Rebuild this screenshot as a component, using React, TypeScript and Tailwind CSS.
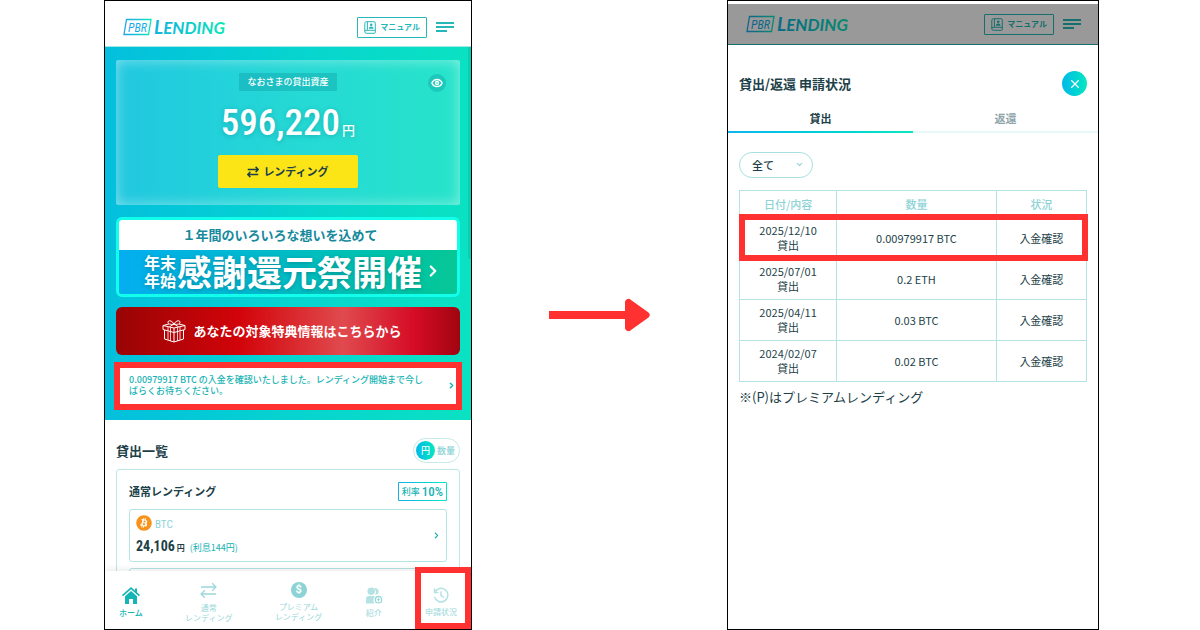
import type { ReactNode } from 'react'
import { FaBitcoin, FaChevronRight } from 'react-icons/fa'
import { ChevronDown, ChevronRight, Eye, X } from 'lucide-react'

const history = [
  { date: '2025/12/10', amount: '0.00979917 BTC', marked: true },
  { date: '2025/07/01', amount: '0.2 ETH' },
  { date: '2025/04/11', amount: '0.03 BTC' },
  { date: '2024/02/07', amount: '0.02 BTC' }
]

function Marker({ className }: { className: string }) {
  return (
    <span
      aria-hidden="true"
      className={`pointer-events-none absolute z-10 border-6 border-[#ff3131] ${className}`}
    />
  )
}

function Logo() {
  return (
    <a href="#" aria-label="PBR LENDING">
      <svg width="108" height="24" viewBox="0 -2 108 24" className="block overflow-visible">
        <defs>
          <linearGradient id="logo" gradientUnits="userSpaceOnUse" x1="0" y1="0" x2="104" y2="0">
            <stop offset="0" stopColor="#1ea4ee" />
            <stop offset="0.5" stopColor="#0bbfd4" />
            <stop offset="1" stopColor="#0ce8b8" />
          </linearGradient>
          <linearGradient id="logoBox" x1="0" y1="0" x2="1" y2="0">
            <stop offset="0" stopColor="#1ea4ee" />
            <stop offset="1" stopColor="#0ce8b8" />
          </linearGradient>
        </defs>
        <path d="M4.500 2.5h24.5l-2.500 15h-24.500z" fill="none" stroke="url(#logoBox)" strokeWidth="1.3" />
        <g fill="url(#logo)" fontStyle="italic">
          <text x="6" y="15" fontSize="12" fontFamily='"Roboto Condensed", "Liberation Sans Narrow", sans-serif'>
            PBR
          </text>
          <text x="32" y="17" fontSize="19" fontWeight="700" fontFamily="Lato, sans-serif">
            L<tspan fontSize="17">ENDING</tspan>
          </text>
        </g>
      </svg>
    </a>
  )
}

function Header() {
  return (
    <header className="flex items-center justify-between px-[17px]">
      <Logo />
      <div className="flex items-center gap-[9px]">
        <button className="flex h-[21px] items-center gap-1 rounded-[1px] border border-[#26b8b8] px-[6px] text-[8px] font-bold text-[#26b8b8]">
          <svg width="12" height="13" viewBox="0 0 12 13" fill="none" stroke="currentColor">
            <path d="M2.5 .7h7.3a1.5 1.5 0 0 1 1.5 1.5v9.1a1 1 0 0 1-1 1H2.4a1.6 1.6 0 0 1-1.6-1.6V2.4A1.7 1.7 0 0 1 2.5.7zM.8 10.5a1.2 1.2 0 0 1 1.2-1.2h9.3M3.4.9v8" />
            <circle cx="7.2" cy="3.8" r="1.3" fill="currentColor" stroke="none" />
            <path d="M4.8 7.8a2.4 2.4 0 0 1 4.8 0z" fill="currentColor" stroke="none" />
          </svg>
          マニュアル
        </button>
        <button aria-label="メニュー" className="flex flex-col gap-[2px]">
          <span className="h-[2px] w-[18px] bg-[#26b8b8]" />
          <span className="h-[2px] w-[18px] bg-[#26b8b8]" />
          <span className="h-[2px] w-[11px] bg-[#26b8b8]" />
        </button>
      </div>
    </header>
  )
}

function SwapIcon({ size, stroke }: { size: number; stroke: number }) {
  return (
    <svg width={size} height={size} viewBox="0 0 16 16" fill="none" stroke="currentColor" strokeWidth={stroke}>
      <path d="M1 4.7h14M11.5 1.2L15 4.7l-3.5 3.5M15 11.3H1M4.5 7.8L1 11.3l3.5 3.5" />
    </svg>
  )
}

function GiftIcon() {
  return (
    <svg width="24" height="24" viewBox="0 0 24 24" fill="none" stroke="white" strokeLinejoin="round">
      <path d="M1 6.5L12 9l11-2.500v4L12 13.500 1 10.500zM1 6.500l6-1.500M23 6.500L17 5M2.500 11v9L12 23l9.500-3v-9M12 9v14" />
      <path d="M6 8v4M6 12.500v8.500M8.500 8.500v4M8.500 13v9M15.500 8.500v4M15.500 13v9M18 8v4M18 12.500v8.500" strokeWidth=".8" />
      <path d="M12 5C9 5.800 5.500 5.200 6 3s4-1.500 6 2c2-3.500 5.500-4.200 6-2s-3 2.800-6 2zM12 5L7.500 7.800M12 5l4.500 2.800" />
    </svg>
  )
}

function NavItem({ icon, active, children }: { icon: ReactNode; active?: boolean; children: ReactNode }) {
  return (
    <a
      href="#"
      className={`flex flex-col items-center gap-1 text-center text-[8px] leading-[10px] ${
        active ? 'font-medium text-[#14b5b5]' : 'text-[#9ad8da]'
      }`}
    >
      {icon}
      <span>{children}</span>
    </a>
  )
}

function BottomNav() {
  return (
    <nav className="relative flex h-[58px] shrink-0 items-center justify-between bg-white px-[14px] pt-1 shadow-[0_-2px_6px_rgba(0,0,0,0.08)]">
      <NavItem
        active
        icon={
          <svg width="18" height="17" viewBox="0 0 18 17" fill="currentColor">
            <path d="M9 0l4 3.500V1.500h2v3.800l3 2.700-1.100 1.300L9 2.300 1.100 9.300 0 8z" />
            <path d="M9 4l6 5.300V17h-4v-5H7v5H3V9.300z" />
          </svg>
        }
      >
        ホーム
      </NavItem>
      <NavItem icon={<SwapIcon size={17} stroke={1.2} />}>
        通常
        <br />
        レンディング
      </NavItem>
      <NavItem
        icon={
          <span className="flex size-4 items-center justify-center rounded-full bg-[#8dd3d6] font-[Roboto,sans-serif] text-[11px] font-bold text-white">
            $
          </span>
        }
      >
        プレミアム
        <br />
        レンディング
      </NavItem>
      <NavItem
        icon={
          <svg width="18" height="17" viewBox="0 0 18 17" fill="#b5e2e2">
            <path d="M9 1.200a3.500 3.500 0 1 1 1 6.800 5 5 0 0 0-1-6.800z" />
            <circle cx="6.200" cy="4.200" r="3.700" />
            <path d="M1 16.500V12a3 3 0 0 1 3-3h4.500a3 3 0 0 1 1.700.5 5 5 0 0 0-.7 7z" />
            <circle cx="13.500" cy="12.700" r="3.200" fill="none" stroke="#9ad8da" strokeWidth="1.300" />
            <path d="M13.500 11v3.400M11.800 12.700h3.400" stroke="#9ad8da" />
          </svg>
        }
      >
        紹介
      </NavItem>
      <NavItem
        icon={
          <svg width="16" height="16" viewBox="0 0 16 16" fill="none" stroke="#b5e2e2" strokeWidth="1.500">
            <path d="M1.500 1.500v4h4M1.800 5.300A6.800 6.800 0 1 1 1.500 10M8 4.500V8.500l3 2" />
          </svg>
        }
      >
        申請状況
      </NavItem>
      <Marker className="-top-1 right-0 bottom-0 w-14" />
    </nav>
  )
}

function AssetCard() {
  return (
    <section className="relative flex flex-col items-center rounded-[2px] bg-white/12 pt-[13px] pb-[17px] shadow-[inset_0_0_14px_rgba(255,255,255,0.45)]">
      <h2 className="rounded-[1px] bg-[#0a8c96]/30 px-2 text-[9px] leading-[18px] font-medium text-white">
        なおさまの貸出資産
      </h2>
      <button
        aria-label="表示切替"
        className="absolute top-[14px] right-[14px] flex size-[18px] items-center justify-center rounded-full bg-[#0a8c96]/30 text-white"
      >
        <Eye size={12} strokeWidth={3} />
      </button>
      <p className="flex items-baseline gap-[2px] pt-[9px] leading-[46px] text-white [text-shadow:0_1px_5px_rgba(0,110,120,0.35)]">
        <span className="font-['Roboto_Condensed','Liberation_Sans_Narrow',sans-serif] text-[37px] font-medium">596,220</span>
        <span className="text-[13px] font-medium">円</span>
      </p>
      <button className="mt-[2px] flex h-[33px] w-[140px] items-center justify-center gap-1 rounded-[2px] bg-[#fbe516] text-[11px] font-bold text-[#1d3f48]">
        <SwapIcon size={12} stroke={2} />
        レンディング
      </button>
    </section>
  )
}

function Campaign() {
  return (
    <a href="#" className="mt-3 block overflow-hidden rounded-md border-[3px] border-[#12ffec]">
      <p className="bg-white pr-4 text-center text-[13px] leading-[30px] font-bold text-[#168a9c]">
        １年間のいろいろな想いを込めて
      </p>
      <div className="flex h-11 items-center justify-center bg-linear-to-r from-[#06aef0] to-[#08c795] pb-[3px] pl-[10px] text-white [text-shadow:0_1px_4px_rgba(0,80,90,0.4)]">
        <span className="text-[16px] leading-[18px] font-bold">
          年末
          <br />
          年始
        </span>
        <span className="ml-px text-[35px] leading-[41px] font-bold">感謝還元祭開催</span>
        <ChevronRight size={18} strokeWidth={3} className="ml-[2px]" />
      </div>
    </a>
  )
}

function HomePhone() {
  return (
    <div className="flex h-screen flex-col overflow-hidden border border-black bg-white">
      <div className="flex h-[46px] shrink-0 flex-col justify-center border-b border-[#a5e8e4] pt-[7px]">
        <Header />
      </div>
      <main className="relative min-h-0 flex-1 overflow-hidden">
        <div className="bg-linear-to-r from-[#04bfdd] via-[#07d3d0] to-[#0be2c2] px-[11px] pt-[13px] pb-[12px]">
          <AssetCard />
          <Campaign />
          <a
            href="#"
            className="mt-[10px] flex h-12 items-center justify-center gap-[7px] rounded-md bg-[linear-gradient(90deg,#990404_0%,#d2040a_36%,#e04a4e_66%,#d50b25_87%,#a00510_100%)] pr-3 text-[13px] font-bold text-white"
          >
            <GiftIcon />
            あなたの対象特典情報はこちらから
          </a>
          <a
            href="#"
            className="relative mt-[7px] flex h-[46px] items-center rounded-[2px] bg-white pr-[4px] pl-[13px] text-[9px] leading-[11px] font-medium text-[#17b3b3]"
          >
            <span className="flex-1 pb-[1px]">
              0.00979917 BTC の入金を確認いたしました。レンディング開始まで今し
              <br />
              ばらくお待ちください。
            </span>
            <ChevronRight size={9} strokeWidth={4} />
            <Marker className="-inset-x-[2px] top-0 -bottom-[2px]" />
          </a>
        </div>
        <span className="absolute top-0 right-0 h-[212px] w-[3px] bg-black/8" />

        <section className="px-[11px] pt-[18px]">
          <div className="flex items-center justify-between">
            <h2 className="text-[13px] font-bold text-[#1d3f48]">貸出一覧</h2>
            <button className="flex h-[25px] items-center gap-[2px] rounded-full border border-[#c5e9e9] px-[2px] pr-1 text-[9px] font-medium text-[#8dd3d6]">
              <span className="flex size-[19px] items-center justify-center rounded-full bg-linear-to-r from-[#04b8e8] to-[#0be8be] text-white">
                円
              </span>
              数量
            </button>
          </div>
          <div className="mt-[6px] rounded-[3px] border border-[#c0e6e6] px-3 pt-3">
            <div className="flex items-center justify-between">
              <h3 className="text-[11px] font-bold text-[#1d3f48]">通常レンディング</h3>
              <p className="rounded-[1px] bg-linear-to-r from-[#17b0e8] to-[#0be8be] p-px">
                <span className="flex items-center gap-[2px] bg-white px-[3px] text-[9px] leading-[17px] font-medium text-[#17b3b3]">
                  利率
                  <span className="font-['Roboto_Condensed','Liberation_Sans_Narrow',sans-serif] text-[13px]">10%</span>
                </span>
              </p>
            </div>
            <a href="#" className="mt-2 flex items-center justify-between rounded-[3px] border border-[#b5e2e2] px-[6px] py-[5px]">
              <div>
                <p className="flex items-center gap-[3px] font-['Roboto_Condensed','Liberation_Sans_Narrow',sans-serif] text-[11px] text-[#8dd3d6]">
                  <FaBitcoin size={16} className="text-[#f7931a]" />
                  <span className="pt-[3px] leading-[13px]">BTC</span>
                </p>
                <p className="mt-[5px] flex items-baseline text-[#1d3f48]">
                  <span className="font-['Roboto_Condensed','Liberation_Sans_Narrow',sans-serif] text-[14px] leading-5 font-bold">
                    24,106
                  </span>
                  <span className="ml-[2px] text-[8px] font-bold">円</span>
                  <span className="ml-[5px] text-[9px] text-[#17b3b3]">(利息144円)</span>
                </p>
              </div>
              <FaChevronRight size={7} className="text-[#17b3b3]" />
            </a>
            <div className="mt-[6px] h-[53px] rounded-[3px] border border-[#b5e2e2]" />
          </div>
        </section>
      </main>
      <BottomNav />
    </div>
  )
}

function StatusPhone() {
  return (
    <div className="flex h-screen flex-col border border-black bg-white pt-[3px]">
      <div className="relative flex h-[41px] shrink-0 flex-col justify-center border-b border-[#26b8b8]">
        <Header />
        <div className="absolute inset-0 -bottom-px bg-black/40" />
      </div>
      <main className="text-[#1d3f48]">
        <div className="flex items-center justify-between px-[11px] pt-[26px]">
          <h1 className="text-[13px] font-bold">貸出/返還 申請状況</h1>
          <button
            aria-label="閉じる"
            className="flex size-[25px] items-center justify-center rounded-full bg-linear-to-r from-[#04b8e8] to-[#0be8be] text-white"
          >
            <X size={14} strokeWidth={2} />
          </button>
        </div>
        <div role="tablist" className="mt-3 grid grid-cols-2 text-[11px] font-bold">
          <button role="tab" aria-selected="true" className="leading-[21px]">
            貸出
            <span className="mt-[2px] block h-[2px] bg-linear-to-r from-[#10b4ee] to-[#0be8be]" />
          </button>
          <button role="tab" aria-selected="false" className="leading-[21px] text-[#8fa5aa]">
            返還
            <span className="mt-[2px] block h-[2px] bg-[#e8f8f8]" />
          </button>
        </div>
        <div className="px-[11px] pt-[18px]">
          <label className="relative inline-block align-top">
            <select aria-label="種別" className="h-[26px] w-[74px] appearance-none rounded-full border border-[#a8dfe0] bg-white pl-3 text-[11px] font-medium">
              <option>全て</option>
            </select>
            <ChevronDown size={9} strokeWidth={3} className="pointer-events-none absolute top-[9px] right-[9px] text-[#8dd3d6]" />
          </label>
          <table className="mt-3 w-full table-fixed border-collapse text-center text-[11px] leading-[15px]">
            <thead>
              <tr className="h-[27px] text-[#8dd3d6]">
                <th className="w-[28%] border border-[#b5e2e2] font-medium">日付/内容</th>
                <th className="w-[46%] border border-[#b5e2e2] font-medium">数量</th>
                <th className="w-[26%] border border-[#b5e2e2] font-medium">状況</th>
              </tr>
            </thead>
            <tbody>
              {history.map(row => (
                <tr key={row.date} className="relative">
                  <td className="border border-[#b5e2e2] py-[5px]">
                    {row.date}
                    <br />
                    貸出
                    {row.marked && <Marker className="-inset-x-px -top-1 -bottom-[2px]" />}
                  </td>
                  <td className="border border-[#b5e2e2]">{row.amount}</td>
                  <td className="border border-[#b5e2e2]">入金確認</td>
                </tr>
              ))}
            </tbody>
          </table>
          <p className="mt-[5px] text-[13px] leading-5">※(P)はプレミアムレンディング</p>
        </div>
      </main>
    </div>
  )
}

export default function App() {
  return (
    <div className="grid min-h-screen grid-cols-[368fr_255fr_372fr] bg-white pr-[101px] pl-[104px] font-['Noto_Sans_CJK_JP',sans-serif]">
      <HomePhone />
      <div className="flex items-center justify-center">
        <svg width="101" height="34" viewBox="0 0 101 34" fill="#ff3131">
          <path d="M0 13h78v8H0z" />
          <path d="M76 5a3.500 3.500 0 0 1 6-3l17.500 12.500a3.500 3.500 0 0 1 0 5L82 32a3.500 3.500 0 0 1-6-3z" />
        </svg>
      </div>
      <StatusPhone />
    </div>
  )
}
